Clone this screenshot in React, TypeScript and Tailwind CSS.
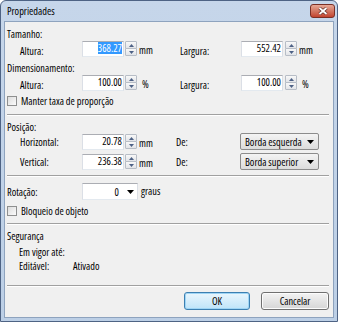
import React from "react";

const fontCls = "font-['Open_Sans','Liberation_Sans',Arial,sans-serif] [font-stretch:80%]";

function Spinner({ className = "" }: { className?: string }) {
  return (
    <div className={`flex h-[15px] w-[12px] flex-col ${className}`}>
      <div className="flex h-[8px] items-center justify-center rounded-[1px] border border-[#b7bdc6] bg-gradient-to-b from-[#f8f8f8] to-[#e2e4e8]">
        <svg width="5" height="3" viewBox="0 0 5 3">
          <path d="M2.5 0 L5 3 L0 3 Z" fill="#4d6185" />
        </svg>
      </div>
      <div className="-mt-px flex h-[8px] items-center justify-center rounded-[1px] border border-[#b7bdc6] bg-gradient-to-b from-[#f8f8f8] to-[#e2e4e8]">
        <svg width="5" height="3" viewBox="0 0 5 3">
          <path d="M0 0 L5 0 L2.5 3 Z" fill="#4d6185" />
        </svg>
      </div>
    </div>
  );
}

function NumField({ value, selected = false }: { value: string; selected?: boolean }) {
  return (
    <div className="flex h-[16px] w-[42px] items-start justify-end border border-[#abadb3] border-x-[#dbdfe6] border-b-[#e3e9ef] bg-white pr-[1px] leading-[12px]">
      <span className={selected ? "bg-[#3399ff] text-white" : ""}>{value}</span>
    </div>
  );
}

function Checkbox({ label }: { label: string }) {
  return (
    <div className="flex h-[12px] items-center leading-[12px]">
      <span className="h-[10px] w-[10px] border border-[#8e8f8f] bg-gradient-to-br from-[#dcdcdc] to-[#fbfbfb]" />
      <span className="ml-[4px]">{label}</span>
    </div>
  );
}

function Separator({ className = "" }: { className?: string }) {
  return <div className={`h-[2px] border-t border-[#a0a0a0] border-b border-b-white ${className}`} />;
}

function Dropdown({ text }: { text: string }) {
  return (
    <div className="-mt-px flex h-[17px] w-[79px] items-center justify-between rounded-[2px] border border-[#8c8c8c] bg-gradient-to-b from-[#f4f4f4] to-[#dcdcdc] pl-[4px] pr-[4px] leading-[12px]">
      <span className="whitespace-nowrap">{text}</span>
      <svg width="7" height="4" viewBox="0 0 7 4">
        <path d="M0 0 L7 0 L3.5 4 Z" fill="#000" />
      </svg>
    </div>
  );
}

function MeasureRow({
  v1,
  v2,
  unit,
  unitPad,
  selected = false,
}: {
  v1: string;
  v2: string;
  unit: string;
  unitPad: string;
  selected?: boolean;
}) {
  return (
    <div className="flex h-[16px] items-start">
      <span className="mt-[4px] w-[75px] pl-[13px] leading-[12px]">Altura:</span>
      <NumField value={v1} selected={selected} />
      <Spinner className="ml-[1px]" />
      <span className={`mt-[3px] w-[43px] leading-[12px] ${unitPad}`}>{unit}</span>
      <span className="mt-[4px] w-[61px] leading-[12px]">Largura:</span>
      <NumField value={v2} />
      <Spinner className="ml-[2px]" />
      <span className={`mt-[3px] leading-[12px] ${unitPad}`}>{unit}</span>
    </div>
  );
}

function PosRow({ label, value, from }: { label: string; value: string; from: string }) {
  return (
    <div className="flex h-[16px] items-start">
      <span className="mt-[2px] w-[75px] pl-[13px] leading-[12px]">{label}</span>
      <NumField value={value} />
      <Spinner className="ml-[1px]" />
      <span className="mt-[3px] w-[39px] pl-[2px] leading-[12px]">mm</span>
      <span className="mt-[2px] w-[64px] leading-[12px]">De:</span>
      <Dropdown text={from} />
    </div>
  );
}

export default function App() {
  return (
    <div
      className={`flex h-[322px] w-[338px] flex-col rounded-t-[6px] border border-[#4e6384] bg-gradient-to-b from-[#c6d6ea] to-[#bccfe6] text-[10.3px] text-black ${fontCls}`}
    >
      <div className="flex h-[20px] items-center justify-between pl-[6px] pr-[2px]">
        <span className="leading-[12px]">Propriedades</span>
        <div className="flex h-[14px] w-[25px] items-center justify-center rounded-[3px] border border-[#7a2f25] bg-gradient-to-b from-[#e7a896] via-[#d27763] to-[#c2432f]">
          <svg width="10" height="8" viewBox="0 0 10 8">
            <path d="M1.5 1 L8.5 7 M8.5 1 L1.5 7" stroke="#5c2a24" strokeWidth="3.2" />
            <path d="M1.5 1 L8.5 7 M8.5 1 L1.5 7" stroke="#ffffff" strokeWidth="1.8" />
          </svg>
        </div>
      </div>

      <div className="mx-[3px] mb-[3px] flex flex-1 flex-col border border-[#8ea3be] bg-[#f0f0f0] pl-[2px] pr-[4px]">
        <div className="mt-[6px] h-[12px] leading-[12px]">Tamanho:</div>
        <div className="mt-[1px]">
          <MeasureRow v1="368.27" v2="552.42" unit="mm" unitPad="pl-[2px]" selected />
        </div>

        <div className="mt-[5px] h-[12px] leading-[12px]">Dimensionamento:</div>
        <div className="mt-[1px]">
          <MeasureRow v1="100.00" v2="100.00" unit="%" unitPad="pl-[5px]" />
        </div>

        <div className="mt-[4px]">
          <Checkbox label="Manter taxa de proporção" />
        </div>

        <Separator className="mt-[7px]" />

        <div className="mt-[5px] h-[12px] leading-[12px]">Posição:</div>
        <div className="mt-[1px]">
          <PosRow label="Horizontal:" value="20.78" from="Borda esquerda" />
        </div>
        <div className="mt-[4px]">
          <PosRow label="Vertical:" value="236.38" from="Borda superior" />
        </div>

        <Separator className="mt-[5px]" />

        <div className="mt-[6px] flex h-[17px] items-start">
          <span className="mt-[3px] w-[75px] leading-[12px]">Rotação:</span>
          <div className="flex h-[17px] w-[56px] items-center justify-end border border-[#abadb3] border-x-[#dbdfe6] border-b-[#e3e9ef] bg-white pr-[3px] leading-[12px]">
            <span className="mr-[8px]">0</span>
            <svg width="7" height="4" viewBox="0 0 7 4">
              <path d="M0 0 L7 0 L3.5 4 Z" fill="#000" />
            </svg>
          </div>
          <span className="ml-[3px] mt-[2px] leading-[12px]">graus</span>
        </div>

        <div className="mt-[5px]">
          <Checkbox label="Bloqueio de objeto" />
        </div>

        <Separator className="mt-[6px]" />

        <div className="mt-[5px] h-[12px] leading-[12px]">Segurança</div>
        <div className="mt-[4px] h-[12px] pl-[12px] leading-[12px]">Em vigor até:</div>
        <div className="mt-[2px] flex h-[12px] pl-[12px] leading-[12px]">
          <span className="w-[54px]">Editável:</span>
          <span>Ativado</span>
        </div>

        <Separator className="mt-[13px]" />

        <div className="mt-[5px] flex justify-end gap-[11px]">
          <button className="h-[18px] w-[66px] rounded-[3px] border border-[#3c7fb1] bg-gradient-to-b from-[#eaf6fd] to-[#bfe4f9] leading-[12px] shadow-[inset_0_0_0_1px_#9fd5f5]">
            OK
          </button>
          <button className="h-[18px] w-[68px] rounded-[3px] border border-[#707070] bg-gradient-to-b from-[#f3f3f3] to-[#d6d6d6] leading-[12px] shadow-[inset_0_0_0_1px_#fcfcfc]">
            Cancelar
          </button>
        </div>
      </div>
    </div>
  );
}
